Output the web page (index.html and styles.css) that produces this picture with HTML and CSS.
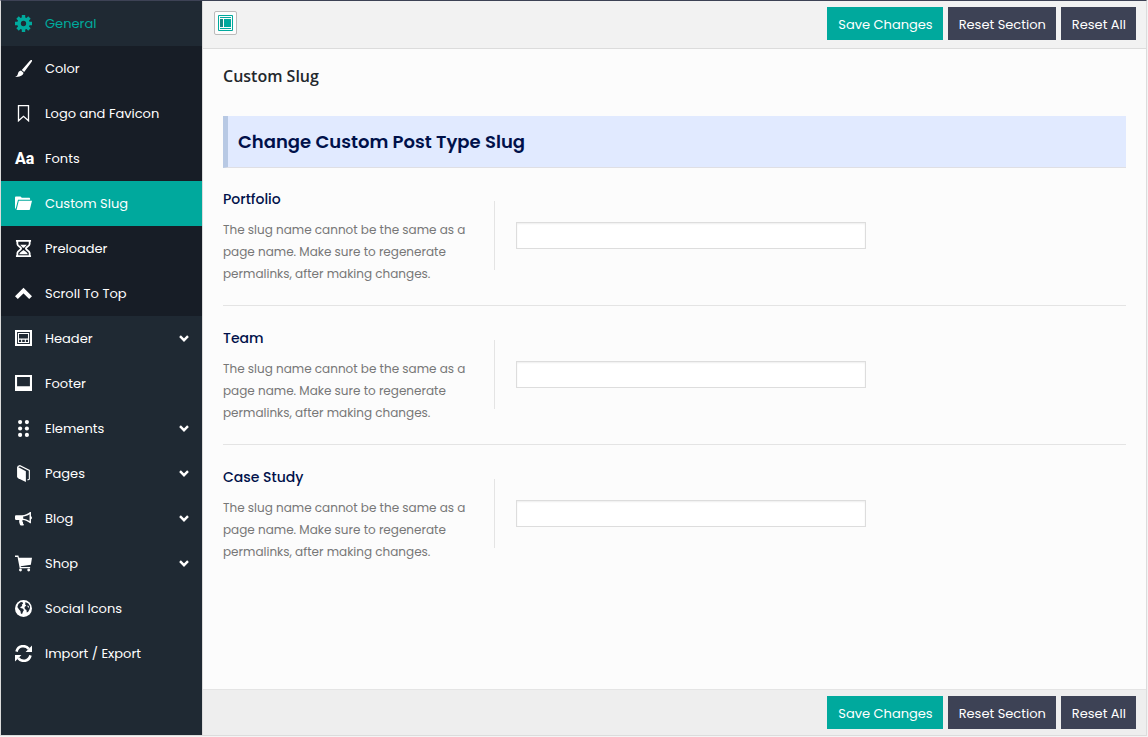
FILE: index.html
```html
<!DOCTYPE html>
<html lang="en">
<head>
<meta charset="utf-8">
<title>Custom Slug</title>
<link rel="stylesheet" href="styles.css">
</head>
<body>
<svg class="defs" aria-hidden="true">
  <symbol id="chevron" viewBox="0 0 10 7"><path d="M1 1.2 5 5.2 9 1.2" fill="none" stroke="currentColor" stroke-width="2.4"/></symbol>
</svg>
<div class="panel">
  <nav class="sidebar">
    <a class="item open" href="#"><svg class="icon" viewBox="0 0 18 18"><path fill="currentColor" fill-rule="evenodd" d="M7.2 0h3.6v2.600l1.400.6L14 1.400 16.600 4l-1.800 1.800.6 1.400H18v3.600h-2.600l-.6 1.400 1.800 1.800-2.600 2.600-1.800-1.800-1.400.6V18H7.200v-2.600l-1.400-.6L4 16.600 1.400 14l1.800-1.800-.6-1.400H0V7.200h2.600l.6-1.400L1.400 4 4 1.400l1.800 1.800 1.400-.6zM9 6.200a2.800 2.800 0 1 0 0 5.600 2.800 2.800 0 0 0 0-5.600z"/></svg><span>General</span></a>
    <div class="submenu">
      <a class="item" href="#"><svg class="icon" viewBox="0 0 18 18"><path fill="currentColor" d="M17.800.1c.5.500.100 1.400-.3 2L9.700 12.700 7.200 10.600 15.800.9c.5-.5 1.400-1.200 2-.8zM6.300 11.200l2.700 2.300c-.2 2.300-3 4.700-9 4.500 2-.8 2.700-2 3.100-3.500.4-1.700 1.500-2.900 3.200-3.300z"/></svg><span>Color</span></a>
      <a class="item" href="#"><svg class="icon" viewBox="0 0 18 18"><path fill="none" stroke="currentColor" stroke-width="1.400" d="M3.700.7h10.600v16L9 12l-5.300 4.700z"/></svg><span>Logo and Favicon</span></a>
      <a class="item" href="#"><span class="icon letters">Aa</span><span>Fonts</span></a>
      <a class="item current" href="#"><svg class="icon" viewBox="0 0 18 18"><path fill="currentColor" d="M0 15V2.700C0 2 .5 1.500 1.200 1.500h4.600L7.200 3h7.600c.7 0 1.200.5 1.200 1.200v.8H3.200L1 13.500zM4 6.200h14L15.800 15c-.2.700-.5 1-1.200 1H1.600z"/></svg><span>Custom Slug</span></a>
      <a class="item" href="#"><svg class="icon" viewBox="0 0 18 18"><path fill="none" stroke="currentColor" stroke-width="1.900" d="M1 1h16M1 17h16M2.500 1v3.200C2.500 6.600 6.500 7.500 6.500 9s-4 2.400-4 4.800V17M15.500 1v3.200c0 2.400-4 3.300-4 4.800s4 2.400 4 4.800V17"/><path fill="currentColor" d="M5.500 5h7L9.600 8.200H8.400zM4.500 15.200c0-2 2.800-3 4.500-4.700 1.700 1.700 4.500 2.700 4.500 4.700z"/></svg><span>Preloader</span></a>
      <a class="item" href="#"><svg class="icon" viewBox="0 0 18 18"><path fill="none" stroke="currentColor" stroke-width="4.200" d="M1.500 13.300 9 5.800l7.500 7.500"/></svg><span>Scroll To Top</span></a>
    </div>
    <a class="item" href="#"><svg class="icon" viewBox="0 0 18 18"><path fill="currentColor" fill-rule="evenodd" d="M0 0h18v17H0zM2.200 2.200v12.600h13.600V2.200z"/><path fill="none" stroke="currentColor" stroke-width="1.100" d="M3.700 3.700h10.600v9.600H3.700z"/><path fill="currentColor" d="M3.700 9h10.600v1.200H3.700zM6.500 9.500h1.100v4H6.500zM10.400 9.500h1.100v4h-1.100z"/></svg><span>Header</span><svg class="chevron"><use href="#chevron"/></svg></a>
    <a class="item" href="#"><svg class="icon" viewBox="0 0 18 18"><path fill="currentColor" fill-rule="evenodd" d="M0 0h18v17H0zM2.200 2.200v9.600h13.600V2.200z"/></svg><span>Footer</span></a>
    <a class="item" href="#"><svg class="icon" viewBox="0 0 18 18"><g fill="currentColor"><circle cx="5.400" cy="2.200" r="2.200"/><circle cx="12.600" cy="2.200" r="2.200"/><circle cx="5.400" cy="9" r="2.200"/><circle cx="12.600" cy="9" r="2.200"/><circle cx="5.400" cy="15.800" r="2.200"/><circle cx="12.600" cy="15.800" r="2.200"/></g></svg><span>Elements</span><svg class="chevron"><use href="#chevron"/></svg></a>
    <a class="item" href="#"><svg class="icon" viewBox="0 0 18 18"><path fill="currentColor" d="M2.200 1.700 11.500 6.500V18L3.400 14c-.8-.4-1.200-.9-1.200-1.800z"/><path fill="none" stroke="currentColor" stroke-width="1.200" d="M2.800 1.700 5.200.7l10 5V15l-2 1"/></svg><span>Pages</span><svg class="chevron"><use href="#chevron"/></svg></a>
    <a class="item" href="#"><svg class="icon" viewBox="0 0 18 18"><path fill="currentColor" fill-rule="evenodd" d="M1.300 5.500h6C10.500 5.500 13.500 4 16 2h.9v4.600c1.400.4 1.400 2.700 0 3.100V14H16c-2.500-2-5-3.200-7.800-3.400-.8.900-.4 1.700.4 2.500-.6.800.2 1.700 1 2.400-.8 1.200-3.300 1.200-4.200.3-.6-1.700-1.400-3.100-.8-5.300H1.300C.6 10.500 0 9.900 0 9.200V6.800c0-.7.600-1.300 1.300-1.300zM15.400 4.400C13.300 5.800 11.100 6.600 8.700 6.900v2.300c2.500.3 4.700 1.200 6.700 2.500z"/></svg><span>Blog</span><svg class="chevron"><use href="#chevron"/></svg></a>
    <a class="item" href="#"><svg class="icon" viewBox="0 0 18 18"><path fill="currentColor" d="M0 .5h3.600l.6 2.300H18l-1.200 7.600L6 11.800l.3 1H16v1.300H5L2.700 2H0z"/><circle cx="5.800" cy="15.900" r="1.500" fill="currentColor"/><circle cx="14.500" cy="15.900" r="1.500" fill="currentColor"/></svg><span>Shop</span><svg class="chevron"><use href="#chevron"/></svg></a>
    <a class="item" href="#"><svg class="icon" viewBox="0 0 18 18"><circle cx="9" cy="9" r="9" fill="currentColor"/><path fill="#1f2833" d="M6.200 2.200 8 2.500l.6 1.200L7.200 5l.5 1.300-2 1.200.1 1.100 2.300.5 1.400 1.500-1 1.700-1 2.600-1.300-.6-.4-2.600L4.300 10 2.500 7.300 3.600 4.200zM11 2l3.200 1.600 1.800 3-.4 3-1.600 2.900-1.500.8-.4-2.600-1.700-1.200-.3-2.200L12 5.900l-1.200-.8z"/><path fill="currentColor" d="m13 5.800 1.500.5.400 1.900-1.300-.6z"/></svg><span>Social Icons</span></a>
    <a class="item" href="#"><svg class="icon" viewBox="0 0 18 18"><path fill="none" stroke="currentColor" stroke-width="2.700" d="M1.600 7C3 .8 10.700-.7 14.600 4.100M16.400 11C15 17.200 7.300 18.700 3.400 13.900"/><path fill="currentColor" d="M18 .5v6.800h-6.800zM0 17.500v-6.800h6.800z"/></svg><span>Import / Export</span></a>
  </nav>
  <main class="main">
    <header class="bar">
      <button class="toggle" type="button" aria-label="Expand all options"><svg viewBox="0 0 15 16"><path fill="none" stroke="#00a99d" d="M.5.5h14v15H.500z"/><path fill="#00a99d" d="M2 2h11v1H2zM2 13h11v1H2zM6 4h7v8H6z"/><path fill="#168a85" d="M2 4h3v8H2z"/></svg></button>
      <div class="actions"><button class="btn save" type="button">Save Changes</button><button class="btn" type="button">Reset Section</button><button class="btn" type="button">Reset All</button></div>
    </header>
    <form class="content">
      <h2 class="title">Custom Slug</h2>
      <h3 class="banner">Change Custom Post Type Slug</h3>
      <div class="field">
        <div class="about"><label for="portfolio">Portfolio</label><p>The slug name cannot be the same as a<br>page name. Make sure to regenerate<br>permalinks, after making changes.</p></div>
        <div class="control"><input id="portfolio" type="text"></div>
      </div>
      <div class="field">
        <div class="about"><label for="team">Team</label><p>The slug name cannot be the same as a<br>page name. Make sure to regenerate<br>permalinks, after making changes.</p></div>
        <div class="control"><input id="team" type="text"></div>
      </div>
      <div class="field">
        <div class="about"><label for="case">Case Study</label><p>The slug name cannot be the same as a<br>page name. Make sure to regenerate<br>permalinks, after making changes.</p></div>
        <div class="control"><input id="case" type="text"></div>
      </div>
    </form>
    <footer class="bar bottom">
      <div class="actions"><button class="btn save" type="button">Save Changes</button><button class="btn" type="button">Reset Section</button><button class="btn" type="button">Reset All</button></div>
    </footer>
  </main>
</div>
</body>
</html>
```
FILE: styles.css
```css
* { box-sizing: border-box; }
body {
  margin: 0;
  padding: 0 1px 1px 0;
  background: #f4f4f4;
  font-family: Poppins, Inter, sans-serif;
  font-size: 13px;
}
.defs { position: absolute; width: 0; height: 0; }
.panel {
  display: flex;
  min-height: calc(100vh - 1px);
  border: 1px solid #dcdcdc;
  border-top-color: #3d4255;
}
.sidebar { flex: 0 0 201px; background: #1f2933; }
.submenu { background: #171d26; }
.item {
  display: flex;
  align-items: center;
  gap: 13px;
  height: 45px;
  padding: 0 13px 0 14px;
  color: #fff;
  text-decoration: none;
}
.item.open { color: #00a99d; }
.item.current { background: #00a99d; }
.icon { flex: none; width: 17px; height: 17px; }
.letters { font: 800 16px/17px "Liberation Sans Narrow", Roboto, sans-serif; }
.chevron { width: 10px; height: 7px; margin-left: auto; }
.main {
  display: flex;
  flex: 1;
  flex-direction: column;
  border-left: 1px solid #dcdcdc;
  background: #fcfcfc;
}
.bar {
  display: flex;
  justify-content: space-between;
  align-items: flex-start;
  padding: 6px 10px 8px 11px;
  border-bottom: 1px solid #dcdcdc;
  background: #f2f2f2;
}
.bottom {
  justify-content: flex-end;
  padding-bottom: 6px;
  border-top: 1px solid #e4e4e4;
  border-bottom: 0;
  background: #eee;
}
.toggle {
  display: flex;
  align-items: center;
  justify-content: center;
  width: 23px;
  height: 24px;
  margin-top: 4px;
  padding: 0;
  border: 1px solid #bbb;
  border-radius: 2px;
  background: #fcfcfc;
}
.toggle svg { width: 15px; height: 16px; }
.actions { display: flex; gap: 5px; }
.btn {
  height: 33px;
  padding: 2px 10px 0 11px;
  border: 0;
  background: #3d4255;
  color: #fff;
  font: inherit;
}
.save { background: #00a99d; }
.content { flex: 1; padding: 15px 20px 20px; }
.title {
  margin: 0 0 28px;
  color: #23282d;
  font: 600 16px/24px "Open Sans", sans-serif;
}
.banner {
  margin: 0;
  padding: 0 10px;
  border-left: 5px solid #b8c9e4;
  border-bottom: 1px solid #dfdfe4;
  background: #e1eaff;
  color: #00114a;
  font-size: 18px;
  font-weight: 600;
  line-height: 51px;
}
.field { display: flex; padding: 20px 0; }
.field + .field { padding-top: 21px; }
.field:not(:last-child) { border-bottom: 1px solid #e4e4e4; }
.about { width: 30%; }
.about label {
  display: block;
  margin-bottom: 9px;
  color: #00114a;
  font-size: 14px;
  font-weight: 500;
  line-height: 22px;
}
.about p { margin: 0; color: #777; font-size: 12px; line-height: 22px; }
.control {
  flex: 1;
  align-self: flex-start;
  margin-top: 13px;
  padding: 21px;
  border-left: 1px solid #e4e4e4;
}
.control input {
  display: block;
  width: 100%;
  max-width: 350px;
  height: 27px;
  padding: 3px 6px;
  border: 1px solid #ddd;
  background: #fff;
  box-shadow: inset 0 1px 2px rgba(0, 0, 0, 0.07);
  font: inherit;
}
```
